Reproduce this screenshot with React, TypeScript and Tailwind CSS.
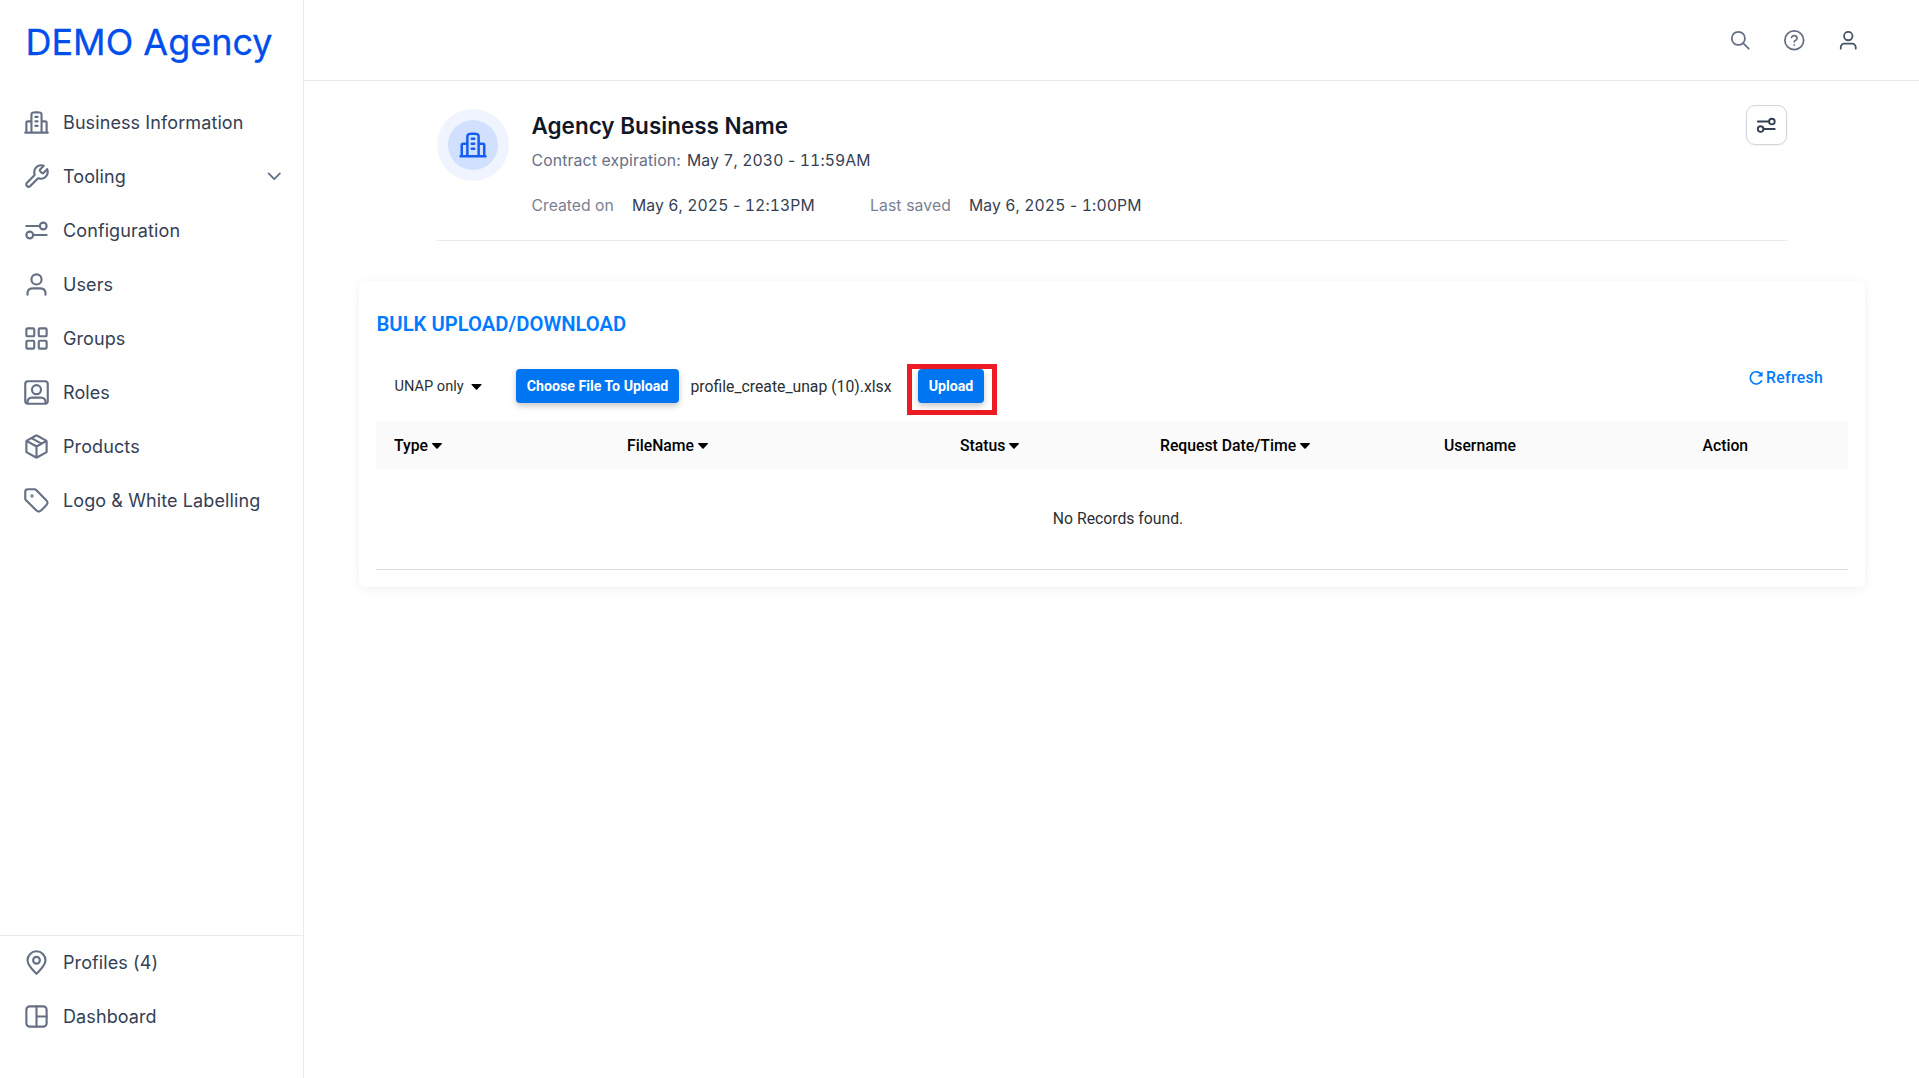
import type { ReactNode } from 'react';
import clsx from 'clsx';

const ICONS = {
  building: (
    <path d="M7.5 11H4.6C4.04 11 3.76 11 3.546 11.109C3.358 11.205 3.205 11.358 3.109 11.546C3 11.76 3 12.04 3 12.6V21M16.5 11H19.4C19.96 11 20.24 11 20.454 11.109C20.642 11.205 20.795 11.358 20.891 11.546C21 11.76 21 12.04 21 12.6V21M16.5 21V6.2C16.5 5.08 16.5 4.52 16.282 4.092C16.09 3.716 15.784 3.41 15.408 3.218C14.98 3 14.42 3 13.3 3H10.7C9.58 3 9.02 3 8.592 3.218C8.216 3.41 7.91 3.716 7.718 4.092C7.5 4.52 7.5 5.08 7.5 6.2V21M22 21H2M11 7H13M11 11H13M11 15H13" />
  ),
  tool: (
    <path d="M15.631 7.631C15.235 7.235 15.037 7.037 14.963 6.809C14.898 6.608 14.898 6.392 14.963 6.191C15.037 5.963 15.235 5.765 15.631 5.369L18.47 2.53C17.717 2.19 16.88 2 16 2C12.686 2 10 4.686 10 8C10 8.491 10.059 8.968 10.17 9.425C10.29 9.914 10.349 10.159 10.339 10.313C10.328 10.475 10.303 10.561 10.229 10.705C10.158 10.843 10.021 10.979 9.748 11.252L3.5 17.5C2.672 18.328 2.672 19.672 3.5 20.5C4.328 21.328 5.672 21.328 6.5 20.5L12.748 14.252C13.021 13.979 13.158 13.843 13.295 13.771C13.439 13.697 13.525 13.673 13.687 13.662C13.841 13.651 14.086 13.711 14.575 13.83C15.032 13.941 15.509 14 16 14C19.314 14 22 11.314 22 8C22 7.12 21.81 6.284 21.47 5.53L18.631 8.369C18.235 8.765 18.037 8.963 17.809 9.037C17.608 9.102 17.392 9.102 17.191 9.037C16.963 8.963 16.765 8.765 16.369 8.369L15.631 7.631Z" />
  ),
  sliders: (
    <>
      <path d="M3 8H15M9 16H21" />
      <circle cx="18" cy="8" r="3" />
      <circle cx="6" cy="16" r="3" />
    </>
  ),
  user: (
    <>
      <path d="M20 21C20 19.604 20 18.907 19.828 18.339C19.44 17.061 18.44 16.06 17.161 15.672C16.593 15.5 15.896 15.5 14.5 15.5H9.5C8.104 15.5 7.407 15.5 6.839 15.672C5.56 16.06 4.56 17.061 4.172 18.339C4 18.907 4 19.604 4 21" />
      <circle cx="12" cy="7.5" r="4.5" />
    </>
  ),
  grid: (
    <>
      <rect x="3" y="3" width="7" height="7" rx="1" />
      <rect x="14" y="3" width="7" height="7" rx="1" />
      <rect x="3" y="14" width="7" height="7" rx="1" />
      <rect x="14" y="14" width="7" height="7" rx="1" />
    </>
  ),
  userSquare: (
    <>
      <rect x="2" y="2" width="20" height="20" rx="2.4" />
      <circle cx="12" cy="9.5" r="4" />
      <path d="M4 21.5C4 20 4 19.8 4.152 19.22C4.504 17.9 5.541 16.87 6.858 16.65C7.42 16.5 8 16.5 9 16.5H15C16 16.5 16.58 16.5 17.142 16.65C18.459 16.87 19.496 17.9 19.848 19.22C20 19.8 20 20 20 21.5" />
    </>
  ),
  box: (
    <path d="M20.5 7.278L12 12M12 12L3.5 7.278M12 12V21.5M21 16.059V7.942C21 7.599 21 7.428 20.95 7.275C20.905 7.14 20.832 7.016 20.735 6.911C20.626 6.792 20.477 6.709 20.177 6.543L12.777 2.432C12.493 2.274 12.352 2.195 12.202 2.165C12.069 2.137 11.932 2.137 11.799 2.165C11.648 2.195 11.507 2.274 11.223 2.432L3.823 6.543C3.523 6.709 3.374 6.792 3.265 6.911C3.168 7.016 3.095 7.14 3.05 7.275C3 7.428 3 7.599 3 7.942V16.059C3 16.401 3 16.573 3.05 16.725C3.095 16.861 3.168 16.985 3.265 17.089C3.374 17.208 3.523 17.291 3.823 17.457L11.223 21.568C11.507 21.726 11.648 21.805 11.799 21.836C11.932 21.863 12.069 21.863 12.202 21.836C12.352 21.805 12.493 21.726 12.777 21.568L20.177 17.457C20.477 17.291 20.626 17.208 20.735 17.089C20.832 16.985 20.905 16.861 20.95 16.725C21 16.573 21 16.401 21 16.059ZM16.5 9.5L7.5 4.5" />
  ),
  tag: (
    <>
      <path d="M2 5.2V9.675C2 10.164 2 10.408 2.055 10.639C2.104 10.843 2.185 11.038 2.295 11.217C2.418 11.418 2.591 11.591 2.937 11.937L10.606 19.606C11.794 20.794 12.388 21.388 13.073 21.611C13.676 21.806 14.325 21.806 14.927 21.611C15.612 21.388 16.206 20.794 17.394 19.606L19.606 17.394C20.794 16.206 21.388 15.612 21.611 14.927C21.806 14.325 21.806 13.676 21.611 13.073C21.388 12.388 20.794 11.794 19.606 10.606L11.937 2.937C11.591 2.591 11.418 2.418 11.217 2.295C11.038 2.185 10.843 2.104 10.639 2.055C10.408 2 10.164 2 9.675 2H5.2C4.08 2 3.52 2 3.092 2.218C2.716 2.41 2.41 2.716 2.218 3.092C2 3.52 2 4.08 2 5.2Z" />
      <circle cx="8" cy="8" r="0.5" />
    </>
  ),
  pin: (
    <>
      <path d="M12 22C16 18 20 14.418 20 10C20 5.582 16.418 2 12 2C7.582 2 4 5.582 4 10C4 14.418 8 18 12 22Z" />
      <circle cx="12" cy="10" r="3" />
    </>
  ),
  layout: (
    <>
      <rect x="3" y="3" width="18" height="18" rx="3" />
      <path d="M12 3V21M12 12H21" />
    </>
  ),
  search: (
    <>
      <circle cx="10" cy="10" r="7" />
      <path d="M21 21L15 15" />
    </>
  ),
  help: (
    <>
      <circle cx="12" cy="12" r="10" />
      <path d="M9.09 9C9.57 7.63 10.72 6.98 12.04 7C13.7 7.03 14.92 8.25 14.92 10C14.92 12 11.99 12.4 11.99 13.6M12 17H12.01" />
    </>
  ),
  chevron: <path d="M6 9L12 15L18 9" />,
};

interface IconProps {
  name: keyof typeof ICONS;
  className?: string;
  strokeWidth?: number;
}

const Icon = ({ name, className, strokeWidth = 1.9 }: IconProps) => (
  <svg
    viewBox="0 0 24 24"
    fill="none"
    stroke="currentColor"
    strokeWidth={strokeWidth}
    strokeLinecap="round"
    strokeLinejoin="round"
    className={clsx('shrink-0', className)}
  >
    {ICONS[name]}
  </svg>
);

interface NavItemProps {
  icon: keyof typeof ICONS;
  label: string;
  expandable?: boolean;
}

const NavItem = ({ icon, label, expandable }: NavItemProps) => (
  <a className="flex h-[54px] items-center pl-[23px] pr-[18px] text-[18px] tracking-[0.1px] text-[#344054]">
    <Icon name={icon} className="size-[27px] text-[#667085]" />
    <span className="ml-[13px] flex-1 whitespace-nowrap">{label}</span>
    {expandable && <Icon name="chevron" strokeWidth={2} className="size-[22.5px] text-[#667085]" />}
  </a>
);

const Caret = ({ className }: { className?: string }) => (
  <svg viewBox="0 0 10 6" className={clsx('h-[6px] shrink-0', className)}>
    <path d="M0.7 0H9.3C10 0 10.2 0.6 9.8 1L5.6 5.4C5.2 5.8 4.8 5.8 4.4 5.4L0.2 1C-0.2 0.6 0 0 0.7 0Z" fill="currentColor" />
  </svg>
);

const BlueButton = ({ className, children }: { className?: string; children: ReactNode }) => (
  <button
    className={clsx(
      'h-[34px] shrink-0 whitespace-nowrap rounded-[4px] bg-[#0075f2] pt-px text-[14.2px] font-bold text-white shadow-[0_3px_6px_rgba(0,0,0,0.22)]',
      className,
    )}
  >
    {children}
  </button>
);

interface TimestampProps {
  date: string;
  time: string;
  className?: string;
}

const Timestamp = ({ date, time, className }: TimestampProps) => (
  <span className={clsx('tracking-[0.09px]', className)}>
    <span className="tabular-nums">{date}</span>
    {' - '}
    <span className="tabular-nums">{time}</span>
  </span>
);

const NAV: NavItemProps[] = [
  { icon: 'building', label: 'Business Information' },
  { icon: 'tool', label: 'Tooling', expandable: true },
  { icon: 'sliders', label: 'Configuration' },
  { icon: 'user', label: 'Users' },
  { icon: 'grid', label: 'Groups' },
  { icon: 'userSquare', label: 'Roles' },
  { icon: 'box', label: 'Products' },
  { icon: 'tag', label: 'Logo & White Labelling' },
];

const COLUMNS = [
  { label: 'Type', width: 'w-[233px]', sortable: true },
  { label: 'FileName', width: 'w-[333px]', sortable: true },
  { label: 'Status', width: 'w-[200px]', sortable: true },
  { label: 'Request Date/Time', width: 'w-[284px]', sortable: true },
  { label: 'Username', width: 'w-[258.5px]', sortable: false },
  { label: 'Action', width: 'w-[100px]', sortable: false },
];

const Sidebar = () => (
  <aside className="flex w-[304px] shrink-0 flex-col border-r border-[#eaeaee]">
    <div className="h-[95px] whitespace-nowrap pl-[25.5px] pt-[20px] text-[36px] leading-[44px] text-[#004eeb] [-webkit-text-stroke:0.3px_#004eeb]">
      DEMO Agency
    </div>
    <nav>
      {NAV.map((item) => (
        <NavItem key={item.label} {...item} />
      ))}
    </nav>
    <nav className="mt-auto h-[143px] border-t border-[#eaeaea]">
      <div className="-mt-px">
        <NavItem icon="pin" label="Profiles (4)" />
        <NavItem icon="layout" label="Dashboard" />
      </div>
    </nav>
  </aside>
);

const BusinessHeader = () => (
  <section className="mb-[40px] ml-[133px] mr-[132px] flex h-[160px] border-b border-[#e9eaee]">
    <div className="mt-[28px] flex size-[72px] items-center justify-center rounded-full bg-[#eff4ff]">
      <div className="flex size-[50px] items-center justify-center rounded-full bg-[#d1e0ff]">
        <Icon name="building" strokeWidth={2} className="size-[30px] text-[#155eef]" />
      </div>
    </div>
    <div className="ml-[22.5px] flex-1 whitespace-nowrap text-[15.75px] leading-[24px] text-[#344054]">
      <h1 className="mt-[28px] text-[22.5px] font-semibold leading-[34px] text-[#101828]">Agency Business Name</h1>
      <div className="mt-[6px] flex">
        <span className="w-[155.5px] tracking-[0.14px] text-[#667085]">Contract expiration:</span>
        <Timestamp date="May 7, 2030" time="11:59AM" />
      </div>
      <div className="mt-[21px] flex">
        <span className="w-[100.5px] text-[#7a8292]">Created on</span>
        <Timestamp date="May 6, 2025" time="12:13PM" className="w-[238px]" />
        <span className="w-[99px] tracking-[0.1px] text-[#7a8292]">Last saved</span>
        <Timestamp date="May 6, 2025" time="1:00PM" />
      </div>
    </div>
    <button className="mt-[24px] flex h-[40px] w-[41px] items-center justify-center rounded-[9px] border border-[#d0d5dd] text-[#344054] shadow-[0_1px_2px_rgba(16,24,40,0.05)]">
      <Icon name="sliders" strokeWidth={2} className="size-[22.5px]" />
    </button>
  </section>
);

const BulkUploadCard = () => (
  <section className="ml-[55px] h-[306px] w-[1506px] rounded-[5px] px-[17px] font-['Roboto',sans-serif] text-[15.75px] text-[#2b2f33] shadow-[0_2px_12px_rgba(0,0,0,0.06)]">
    <h2 className="pl-[0.5px] pt-[30px] text-[20.25px] font-semibold leading-[27px] text-[#007bff]">BULK UPLOAD/DOWNLOAD</h2>
    <div className="flex h-[84px] pl-[18px] pt-[25px]">
      <div className="mt-[7px] flex h-[34px] w-[122px] items-center pl-[0.5px] text-[14.6px]">
        <span className="whitespace-nowrap">UNAP only</span>
        <Caret className="ml-[7px] w-[11px] text-black" />
      </div>
      <BlueButton className="mt-[6px] w-[163px]">Choose File To Upload</BlueButton>
      <span className="ml-[11.5px] mt-[7px] w-[216.5px] whitespace-nowrap leading-[34px]">profile_create_unap (10).xlsx</span>
      <div className="mt-px h-[51px] w-[90px] shrink-0 border-[5px] border-[#ed1c24] pl-[6px]">
        <BlueButton className="w-[66px]">Upload</BlueButton>
      </div>
      <a className="ml-auto mr-[25px] mt-[3px] flex h-[24px] items-center gap-[2px] font-medium tracking-[0.35px] text-[#007bff]">
        <svg viewBox="0 0 16 16" className="size-[16px]" fill="none" stroke="currentColor" strokeWidth="1.7">
          <path d="M13.5 4.6A6.1 6.1 0 1 0 13.9 10.4" />
          <path d="M14.6 1.4V6.6H9.4Z" fill="currentColor" stroke="none" />
        </svg>
        Refresh
      </a>
    </div>
    <div className="flex h-[47px] items-center bg-[#fafafa] pl-[18px] font-medium text-black">
      {COLUMNS.map((column) => (
        <div key={column.label} className={clsx('flex shrink-0 items-center gap-1 whitespace-nowrap', column.width)}>
          {column.label}
          {column.sortable && <Caret className="w-[10px]" />}
        </div>
      ))}
    </div>
    <div className="flex h-[101px] items-center justify-center border-b border-[#dedede] pl-[12px]">No Records found.</div>
  </section>
);

export default function App() {
  return (
    <div className="flex h-[1078px] w-[1919px] overflow-hidden bg-white font-['Inter',sans-serif]">
      <Sidebar />
      <main className="flex-1">
        <header className="flex h-[81px] items-center justify-end gap-[31.5px] border-b border-[#e9eaf0] pr-[59.5px] text-[#667085]">
          <Icon name="search" className="size-[22.5px]" />
          <Icon name="help" className="size-[22.5px]" />
          <Icon name="user" className="size-[22.5px] text-[#475467]" />
        </header>
        <BusinessHeader />
        <BulkUploadCard />
      </main>
    </div>
  );
}
